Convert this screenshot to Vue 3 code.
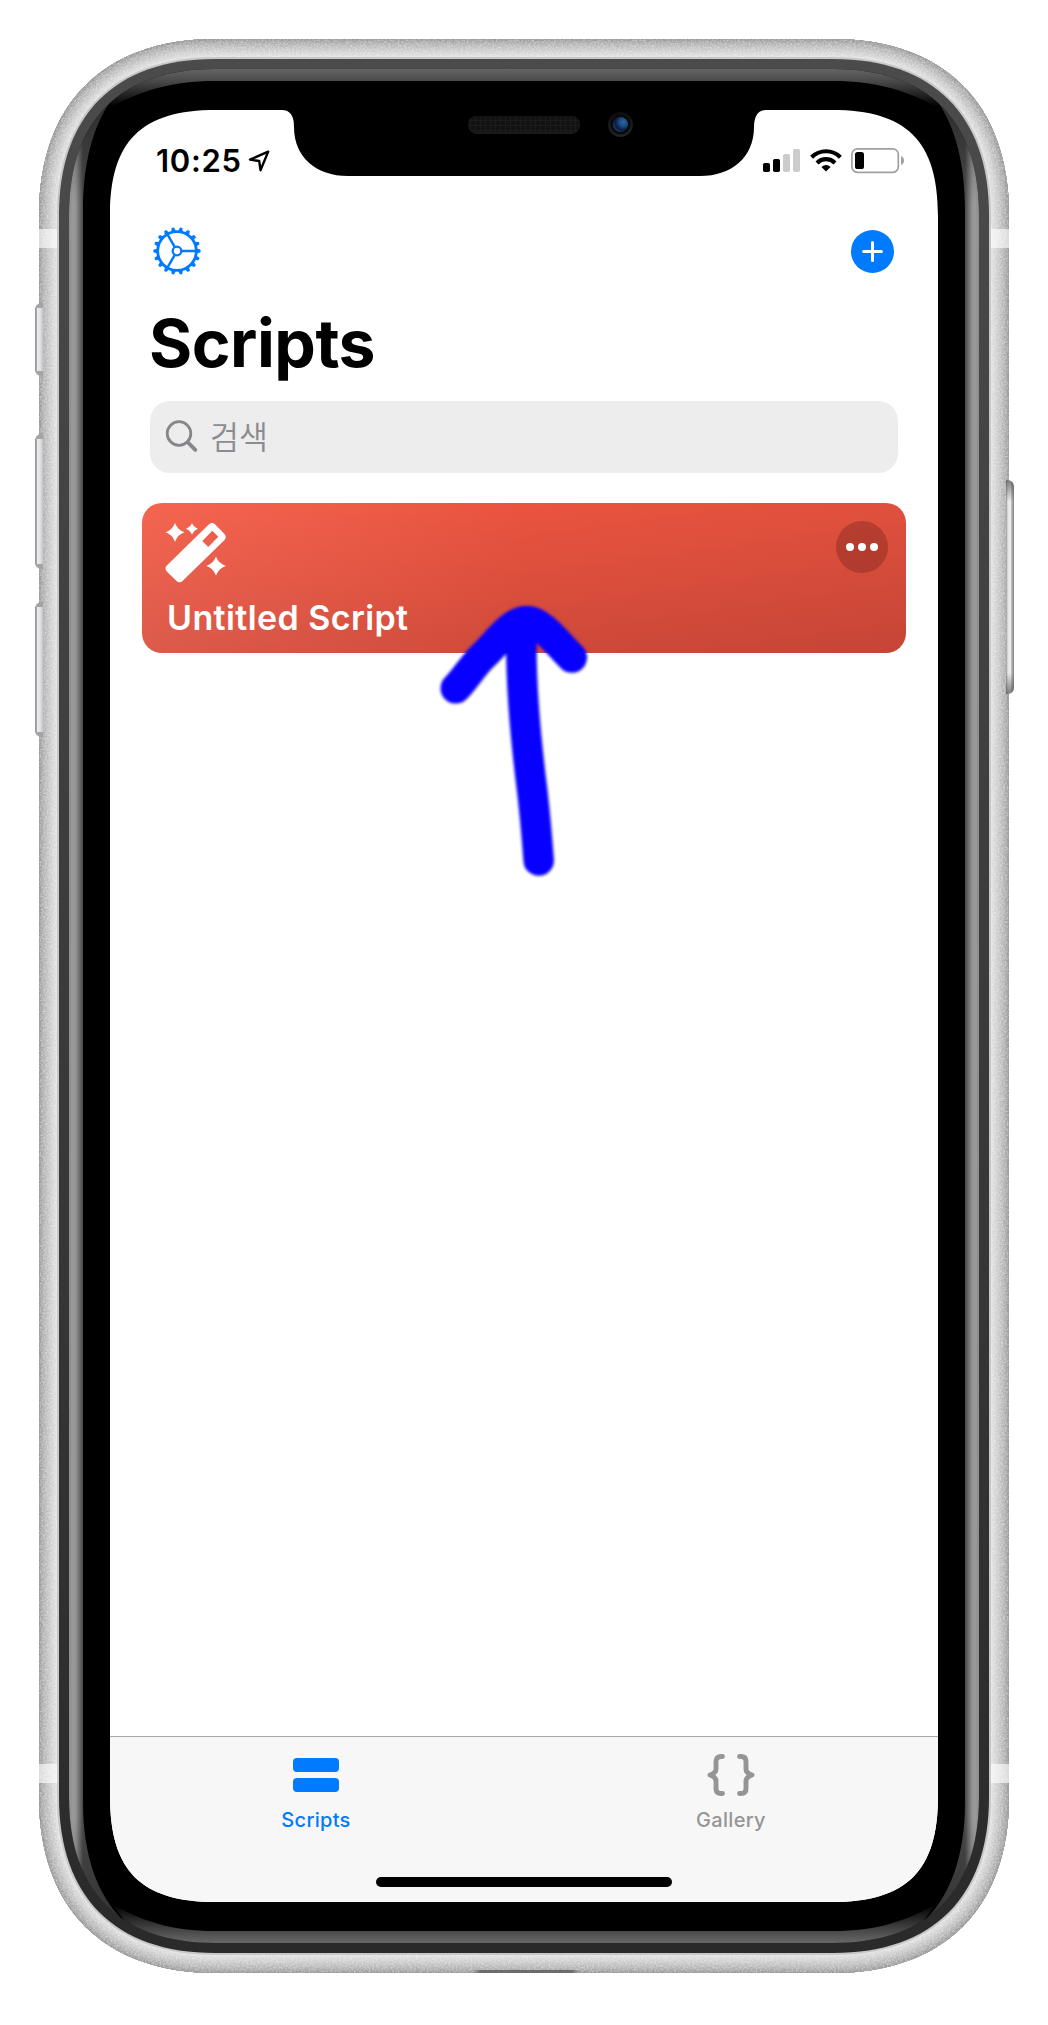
<script setup>
// Rounded rectangle with continuous (squircle-like) corners
const squircle = (x0, y0, x1, y1, e, c) =>
  `M${x0} ${y0 + e}C${x0} ${y0 + c} ${x0 + c} ${y0} ${x0 + e} ${y0}H${x1 - e}` +
  `C${x1 - c} ${y0} ${x1} ${y0 + c} ${x1} ${y0 + e}V${y1 - e}` +
  `C${x1} ${y1 - c} ${x1 - c} ${y1} ${x1 - e} ${y1}H${x0 + e}` +
  `C${x0 + c} ${y1} ${x0} ${y1 - c} ${x0} ${y1 - e}Z`

const shell = squircle(39, 39, 1009, 1973, 176, 65)
const rim = squircle(57, 57, 991, 1955, 158, 57)
const ring = squircle(59, 59, 989, 1953, 156, 56)
const glass = squircle(69, 69, 979, 1943, 146, 51)

const shades = Array.from({ length: 19 }, (_, i) => {
  const depth = 19 - i
  const v = Math.round(138 + 90 * Math.pow(depth / 19, 0.65))
  return { width: depth * 2, color: `rgb(${v},${v},${v})` }
})

const sideBand = 'M60 60L112 99C92 127 83 165 83 210V1802C83 1855 97 1897 126 1923L60 1950Z'
const topBand = 'M104 60V100L111 107C140 91 172 81 215 81H833C876 81 908 91 937 107L944 100V60Z'
const bottomBand = 'M128 1950V1925L111 1903C140 1921 172 1931 215 1931H833C876 1931 908 1921 937 1903L920 1925V1950Z'

const leftKeys = [
  { y: 303, h: 73 },
  { y: 434, h: 135 },
  { y: 602, h: 135 },
]
const bars = [
  { x: 0, h: 9, on: true },
  { x: 10, h: 13, on: true },
  { x: 20, h: 18, on: false },
  { x: 30, h: 23, on: false },
]
const teeth = Array.from({ length: 18 }, (_, i) => i * 20)
</script>

<template>
  <main class="page">
    <svg class="device" viewBox="0 0 1048 2025" width="1048" height="2025" aria-hidden="true">
      <defs>
        <clipPath id="shellClip"><path :d="shell" /></clipPath>
        <clipPath id="glassClip"><path :d="glass" /></clipPath>
        <filter id="grain" x="0" y="0" width="100%" height="100%">
          <feTurbulence type="fractalNoise" baseFrequency="0.55" numOctaves="2" seed="4" />
          <feColorMatrix values="0 0 0 0 1  0 0 0 0 1  0 0 0 0 1  1.8 0 0 0 -0.65" />
        </filter>
        <linearGradient id="ringFill" x1="0" y1="0" x2="0" y2="1">
          <stop offset="0" stop-color="#4b4b4b" /><stop offset="1" stop-color="#2a2a2a" />
        </linearGradient>
        <linearGradient id="sideFill" gradientUnits="userSpaceOnUse" x1="69" y1="0" x2="83" y2="0">
          <stop offset="0" stop-color="#8c8c8c" /><stop offset=".3" stop-color="#9c9c9c" />
          <stop offset=".5" stop-color="#929292" /><stop offset="1" stop-color="#484848" />
        </linearGradient>
        <linearGradient id="sideFade" gradientUnits="userSpaceOnUse" x1="0" y1="95" x2="0" y2="1925">
          <stop offset="0" stop-color="#000" stop-opacity=".4" /><stop offset=".06" stop-color="#000" stop-opacity="0" />
          <stop offset=".94" stop-color="#000" stop-opacity="0" /><stop offset="1" stop-color="#000" stop-opacity=".3" />
        </linearGradient>
        <linearGradient id="topFill" gradientUnits="userSpaceOnUse" x1="0" y1="69" x2="0" y2="107">
          <stop offset="0" stop-color="#656565" /><stop offset=".31" stop-color="#4a4a4a" /><stop offset="1" stop-color="#000" />
        </linearGradient>
        <linearGradient id="bottomFill" gradientUnits="userSpaceOnUse" x1="0" y1="1943" x2="0" y2="1905">
          <stop offset="0" stop-color="#686868" /><stop offset=".31" stop-color="#4a4a4a" /><stop offset="1" stop-color="#000" />
        </linearGradient>
        <linearGradient id="keyFill" x1="0" y1="0" x2="1" y2="0">
          <stop offset="0" stop-color="#909195" /><stop offset=".2" stop-color="#a8a9ac" />
          <stop offset=".28" stop-color="#ececef" /><stop offset=".65" stop-color="#e0e1e4" /><stop offset="1" stop-color="#c4c4c6" />
        </linearGradient>
        <linearGradient id="powerFill" x1="1" y1="0" x2="0" y2="0">
          <stop offset="0" stop-color="#858585" /><stop offset=".3" stop-color="#b4b4b5" />
          <stop offset=".38" stop-color="#ededf0" /><stop offset=".75" stop-color="#e6e6e9" /><stop offset="1" stop-color="#9a9a9a" />
        </linearGradient>
        <linearGradient id="powerFade" x1="0" y1="0" x2="0" y2="1">
          <stop offset="0" stop-color="#555" stop-opacity=".75" /><stop offset=".1" stop-color="#555" stop-opacity="0" />
          <stop offset=".9" stop-color="#555" stop-opacity="0" /><stop offset="1" stop-color="#555" stop-opacity=".75" />
        </linearGradient>
        <radialGradient id="lens" cx=".68" cy=".35" r=".7">
          <stop offset="0" stop-color="#2467a6" /><stop offset=".4" stop-color="#1b4a80" /><stop offset=".75" stop-color="#0c1a3a" /><stop offset="1" stop-color="#1c3c68" />
        </radialGradient>
        <linearGradient id="lensRim" x1="0" y1="0" x2="0" y2="1">
          <stop offset="0" stop-color="#0d0d0d" /><stop offset="1" stop-color="#242424" />
        </linearGradient>
        <pattern id="mesh" width="5" height="5" patternUnits="userSpaceOnUse">
          <rect width="5" height="5" fill="#121212" /><path d="M0 .5H5M.5 0V5" stroke="#1b1b1b" />
        </pattern>
        <linearGradient id="port" x1="0" y1="0" x2="1" y2="0">
          <stop offset="0" stop-color="#707070" stop-opacity="0" /><stop offset=".08" stop-color="#6c6c6c" />
          <stop offset=".92" stop-color="#6c6c6c" /><stop offset="1" stop-color="#707070" stop-opacity="0" />
        </linearGradient>
      </defs>

      <g clip-path="url(#shellClip)">
        <path :d="shell" fill="#e6e6e6" />
        <path v-for="s in shades" :key="s.width" :d="shell" fill="none" :stroke="s.color" :stroke-width="s.width" />
        <rect x="39" y="39" width="970" height="1934" filter="url(#grain)" opacity=".5" />
        <g fill="#fff" fill-opacity=".62">
          <rect x="39" y="229" width="20" height="19" /><rect x="989" y="229" width="20" height="19" />
          <rect x="39" y="1764" width="20" height="19" /><rect x="989" y="1764" width="20" height="19" />
        </g>
        <rect x="472" y="1970" width="108" height="3" fill="url(#port)" />
      </g>
      <path :d="rim" fill="#c2c0c0" fill-opacity=".85" />
      <path :d="ring" fill="url(#ringFill)" />
      <path :d="glass" fill="#000" />
      <g clip-path="url(#glassClip)">
        <path :d="topBand" fill="url(#topFill)" />
        <path :d="bottomBand" fill="url(#bottomFill)" />
        <g v-for="m in ['', 'translate(1048 0) scale(-1 1)']" :key="m" :transform="m">
          <path :d="sideBand" fill="url(#sideFill)" />
          <path :d="sideBand" fill="url(#sideFade)" />
        </g>
      </g>

      <g v-for="k in leftKeys" :key="k.y">
        <path :d="`M43 ${k.y}H41Q35 ${k.y + 1} 35 ${k.y + 7}V${k.y + k.h - 7}Q35 ${k.y + k.h - 1} 41 ${k.y + k.h}H43Z`" fill="#a4a4a6" />
        <rect x="35" :y="k.y + 5" width="8" :height="k.h - 10" fill="url(#keyFill)" />
      </g>
      <path d="M1006 480H1008Q1014 481 1014 487V687Q1014 693 1008 694H1006Z" fill="url(#powerFill)" />
      <path d="M1006 480H1008Q1014 481 1014 487V687Q1014 693 1008 694H1006Z" fill="url(#powerFade)" />

      <rect x="468" y="116" width="112" height="18" rx="9" fill="#1b1b1b" />
      <rect x="468" y="116" width="112" height="16" rx="8" fill="url(#mesh)" />
      <circle cx="620.5" cy="124.5" r="12.5" fill="url(#lensRim)" />
      <circle cx="620.5" cy="124.5" r="9.8" fill="#080808" />
      <circle cx="620.5" cy="124.5" r="7.6" fill="url(#lens)" />
    </svg>

    <section class="screen">
      <header class="status">
        <span class="time">10:25</span>
        <svg class="locate" width="22" height="22" viewBox="0 0 22 22"><path d="M20.2 1.6 2 9.6 11.2 11 12.5 20.2Z" fill="none" stroke="#000" stroke-width="2.4" stroke-linejoin="round" /></svg>
        <svg class="signal" width="37" height="23" viewBox="0 0 37 23">
          <rect v-for="b in bars" :key="b.x" :x="b.x" :y="23 - b.h" width="7" :height="b.h" rx="1.7" :fill="b.on ? '#000' : '#ccc'" />
        </svg>
        <svg class="wifi" width="32" height="24" viewBox="0 0 32 24">
          <g fill="none" stroke="#000" stroke-width="4.2">
            <path d="M1.6 9.2A20.4 20.4 0 0 1 30.4 9.2" /><path d="M7 14.9A12.8 12.8 0 0 1 25 14.9" />
          </g>
          <path d="M16 23.5 11.4 19Q16 15.2 20.6 19Z" />
        </svg>
        <svg class="battery" width="54" height="26" viewBox="0 0 54 26">
          <rect x=".9" y=".9" width="46.4" height="23.4" rx="5.5" fill="none" stroke="#a0a0a0" stroke-width="1.7" />
          <rect x="4" y="4" width="9" height="17" rx="2.6" />
          <path d="M50 8Q53 9.5 53 12.5T50 17Z" fill="#a0a0a0" />
        </svg>
      </header>

      <nav class="toolbar">
        <svg width="48" height="48" viewBox="-24 -24 48 48" fill="none" stroke="#007aff">
          <circle r="19.3" stroke-width="2.8" />
          <circle r="4.3" stroke-width="2.3" />
          <path d="M5 0H19M-2.5-4.3-9.5-16.5M-2.5 4.3-9.5 16.5" stroke-width="2.5" />
          <path v-for="t in teeth" :key="t" d="M20-2.3 23.2-1.4Q24.4 0 23.2 1.4L20 2.3Z" fill="#007aff" stroke="none" :transform="`rotate(${t})`" />
        </svg>
        <svg width="43" height="43" viewBox="0 0 43 43">
          <circle cx="21.5" cy="21.5" r="21.5" fill="#007aff" />
          <path d="M21.5 12.6V30.4M12.6 21.5H30.4" stroke="#fff" stroke-width="3" stroke-linecap="round" />
        </svg>
      </nav>

      <h1 class="title">Scripts</h1>

      <div class="search">
        <svg width="34" height="34" viewBox="0 0 34 34" fill="none" stroke="#868689" stroke-linecap="round">
          <circle cx="14" cy="13.5" r="11.8" stroke-width="2.8" /><path d="M23 22.5 30.3 29.8" stroke-width="3.8" />
        </svg>
        <span>검색</span>
      </div>

      <article class="card">
        <div class="card-top">
          <svg class="wand" width="62" height="62" viewBox="0 0 62 62" fill="#fff">
            <path fill-rule="evenodd" d="M44 2.2Q47 -.2 50 2.3L59.5 12Q62 15 59.5 18L17.5 59Q14.5 61.5 11.5 59L1.8 49.5Q-.8 46.5 1.8 43.5ZM47.3 8.7 37.3 19 43.2 25 53.3 14.7Z" />
            <path d="M10 1Q12.7 8.2 19.5 10.3 12.7 12.5 10 19.8 7.3 12.5.5 10.3 7.3 8.2 10 1ZM27 1Q28.8 5.3 33 6.8 28.8 8.5 27 12.8 25.2 8.5 21 6.8 25.2 5.3 27 1ZM51 34.6Q53.7 41.8 60.7 44 53.7 46.2 51 53.5 48.3 46.2 41.5 44 48.3 41.8 51 34.6Z" />
          </svg>
          <button class="more" aria-label="More"><i></i><i></i><i></i></button>
        </div>
        <h2>Untitled Script</h2>
      </article>

      <footer class="tabs">
        <div class="tab active">
          <svg width="48" height="42" viewBox="0 0 48 42"><rect x="1" y="4" width="46" height="14" rx="4" fill="#007aff" /><rect x="1" y="24" width="46" height="14" rx="4" fill="#007aff" /></svg>
          <span>Scripts</span>
        </div>
        <div class="tab">
          <svg width="48" height="42" viewBox="0 0 48 42" fill="none" stroke="#959595" stroke-width="4.9" stroke-linecap="round" stroke-linejoin="round">
            <path d="M15.5 2.5H14Q9 2.5 9 7.5V15Q9 19 3 21 9 23 9 27V34.5Q9 39.5 14 39.5H15.5" />
            <path d="M32.5 2.5H34Q39 2.5 39 7.5V15Q39 19 45 21 39 23 39 27V34.5Q39 39.5 34 39.5H32.5" />
          </svg>
          <span>Gallery</span>
        </div>
        <div class="home"></div>
      </footer>
    </section>

    <svg class="pointer" width="200" height="310" viewBox="420 580 200 310" fill="none" stroke="#0800ff" stroke-width="30.5" stroke-linecap="round" stroke-linejoin="round">
      <path d="M455.8 688.3C465 679 474 664 484 655C496 644 511 621 527 621C541 621 558 644 571.8 657.5" />
      <path d="M521.5 630C520 690 527 750 532.5 793C535 815 537 838 538.7 860.5" />
    </svg>
  </main>
</template>

<style>
body { margin: 0; background: #fff; }
</style>

<style scoped>
.page {
  position: relative;
  display: grid;
  width: 1048px;
  height: 2025px;
  overflow: hidden;
  background: #fff;
  font-family: Inter, "Noto Sans CJK KR", sans-serif;
  color: #000;
}
.device, .screen { grid-area: 1 / 1; }
svg { display: block; flex: none; overflow: visible; }
.screen {
  display: flex;
  flex-direction: column;
  box-sizing: border-box;
  width: 828px;
  height: 1792px;
  margin: 110px;
  z-index: 1;
  background: #fff;
  clip-path: path("M0 106C0 31 31 0 106 0H172Q184 0 184 17C184 47 206 66 238 66H590C622 66 644 47 644 17Q644 0 656 0H722C797 0 828 31 828 106V1686C828 1761 797 1792 722 1792H106C31 1792 0 1761 0 1686Z");
}
.status {
  display: flex;
  align-items: flex-start;
  height: 65px;
  padding: 38px 33px 0 46px;
  box-sizing: border-box;
}
.time {
  font-size: 31px;
  line-height: 26px;
  font-weight: 600;
  letter-spacing: .7px;
}
.locate { margin: 2px 0 0 6px; }
.signal { margin: 1px 10px 0 auto; }
.wifi { margin-right: 9px; }
.toolbar {
  display: flex;
  justify-content: space-between;
  align-items: center;
  height: 48px;
  padding: 0 44px 0 43px;
  margin-top: 52px;
}
.title {
  margin: 28px 0 0 39px;
  font-size: 66px;
  line-height: 80px;
  font-weight: 700;
  letter-spacing: -.5px;
}
.search {
  display: flex;
  align-items: center;
  height: 72px;
  margin: 18px 40px 0;
  padding: 0 15px;
  box-sizing: border-box;
  border-radius: 20px;
  background: #ededee;
  color: #8c8c90;
  font: 350 31.5px/40px "Noto Sans CJK KR", sans-serif;
}
.search span { margin: -5px 0 0 11px; }
.card {
  display: flex;
  flex-direction: column;
  height: 150px;
  margin: 30px 32px 0;
  padding: 18px 18px 0 24px;
  box-sizing: border-box;
  border-radius: 20px;
  background:
    linear-gradient(90deg, rgba(255, 255, 255, .08), rgba(255, 255, 255, 0) 50%),
    linear-gradient(172deg, #f45842, #c54536);
  color: #fff;
}
.card-top { display: flex; justify-content: space-between; height: 67px; }
.wand { margin: 1px 0 0 -1px; }
.more {
  display: flex;
  justify-content: center;
  align-items: center;
  gap: 4px;
  width: 52px;
  height: 52px;
  padding: 0;
  border: 0;
  border-radius: 50%;
  background: rgba(60, 10, 10, .24);
}
.more i { width: 8px; height: 8px; border-radius: 50%; background: #fff; }
.card h2 {
  margin: 9px 0 0 1px;
  font-size: 34px;
  line-height: 42px;
  font-weight: 600;
  letter-spacing: .4px;
}
.tabs {
  display: grid;
  grid-template-columns: 1fr 1fr;
  grid-template-rows: 140px 10px;
  height: 166px;
  margin-top: auto;
  box-sizing: border-box;
  border-top: 1px solid #a9a9a9;
  background: #f7f7f7;
  color: #959595;
}
.tab {
  display: flex;
  flex-direction: column;
  align-items: center;
  padding-top: 17px;
  font-size: 20px;
  line-height: 24px;
  font-weight: 500;
}
.tab span { margin-top: 12px; letter-spacing: .3px; }
.active { padding-right: 2px; color: #007aff; }
.home {
  grid-column: 1 / 3;
  justify-self: center;
  width: 296px;
  height: 10px;
  border-radius: 5px;
  background: #000;
}
.pointer {
  position: absolute;
  left: 420px;
  top: 580px;
  z-index: 2;
  filter: blur(1.6px);
}
</style>
